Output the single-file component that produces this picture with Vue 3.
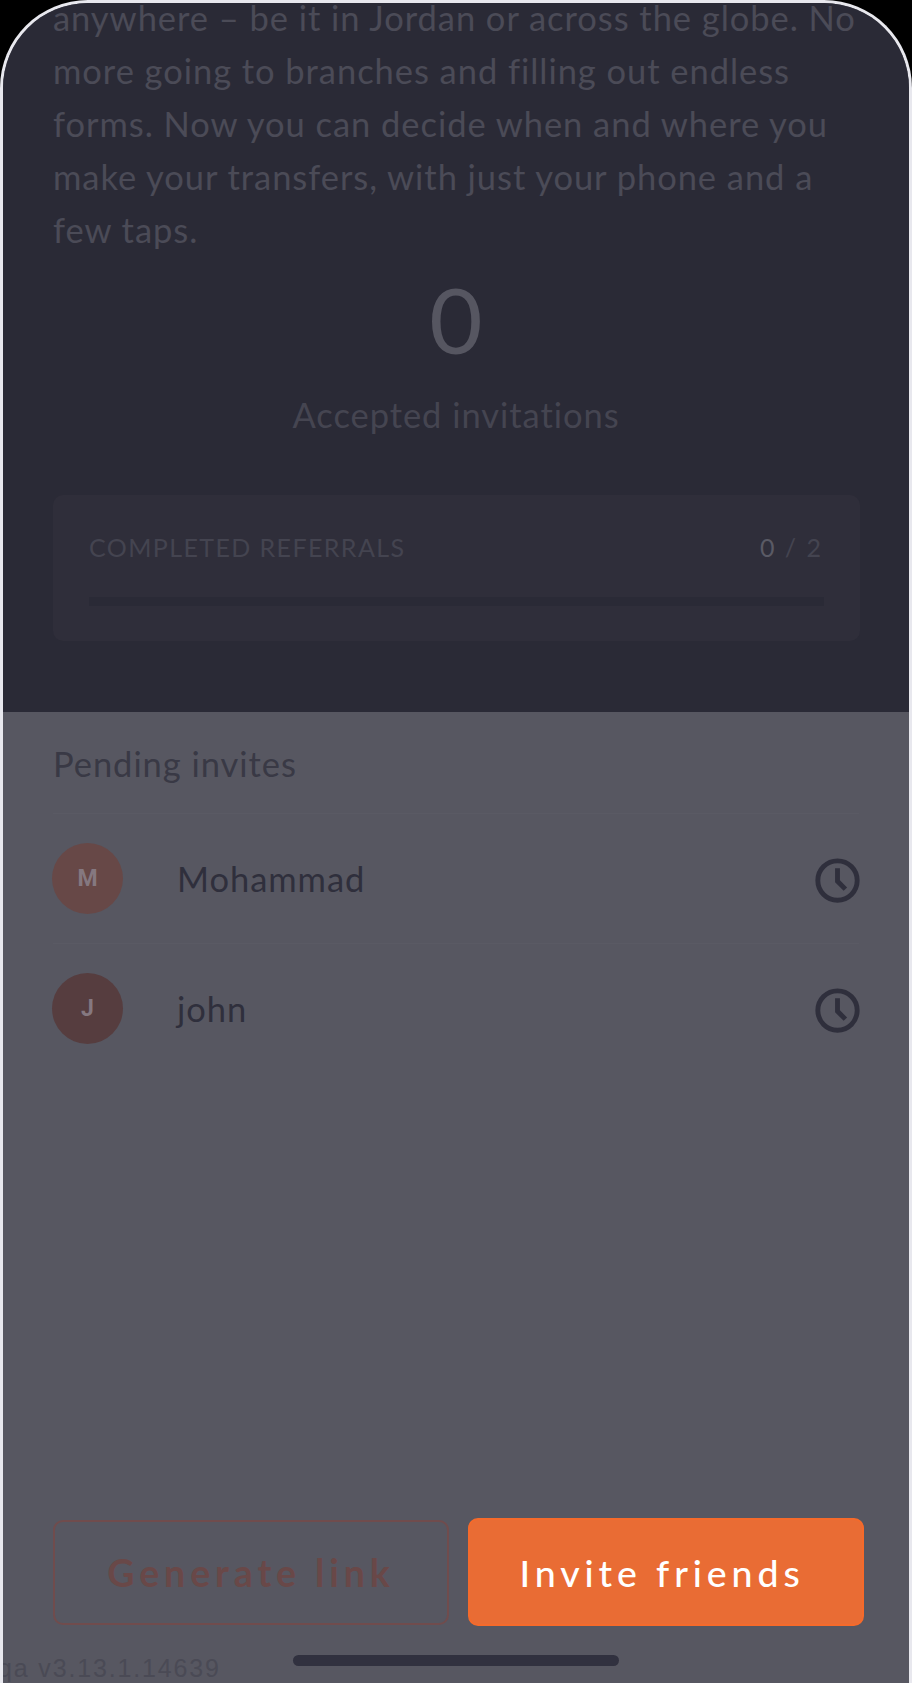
<script setup>
const invites = [
  { initial: 'M', name: 'Mohammad', tone: 'tone-m' },
  { initial: 'J', name: 'john', tone: 'tone-j' },
]
</script>

<template>
  <div class="device">
    <div class="screen">
      <section class="top">
        <p class="copy">anywhere – be it in Jordan or across the globe. No more going to branches and filling out endless forms. Now you can decide when and where you make your transfers, with just your phone and a few taps.</p>
        <div class="count">0</div>
        <div class="count-label">Accepted invitations</div>
        <div class="card">
          <div class="card-head">
            <span class="card-title">COMPLETED REFERRALS</span>
            <span class="card-value"><b>0</b> / 2</span>
          </div>
          <div class="track"></div>
        </div>
      </section>
      <section class="bottom">
        <h2 class="pending">Pending invites</h2>
        <ul class="list">
          <li v-for="item in invites" :key="item.name" class="row">
            <span class="avatar" :class="item.tone">{{ item.initial }}</span>
            <span class="name">{{ item.name }}</span>
            <svg class="clock" viewBox="0 0 24 24" fill="none" stroke="currentColor" stroke-width="2.6">
              <circle cx="12" cy="12" r="10.5" />
              <path d="M12 5.5V12.4L16.2 16.6" />
            </svg>
          </li>
        </ul>
        <div class="actions">
          <button class="btn ghost">Generate link</button>
          <button class="btn solid">Invite friends</button>
        </div>
      </section>
      <span class="version">qa v3.13.1.14639</span>
      <span class="home"></span>
    </div>
  </div>
</template>

<style>
html, body { margin: 0; background: #000; }
</style>

<style scoped>
.device {
  width: 912px;
  height: 1683px;
  background: #000;
  font-family: Lato, "Open Sans", sans-serif;
}
.screen {
  position: relative;
  box-sizing: border-box;
  height: 1683px;
  display: flex;
  flex-direction: column;
  overflow: hidden;
  border: 3px solid #e8e8ee;
  border-bottom: 0;
  border-radius: 88px 88px 0 0;
  background: #575761;
}
.top {
  box-sizing: border-box;
  height: 709px;
  padding: 0 50px;
  background: #2a2a36;
  display: flex;
  flex-direction: column;
}
.copy {
  margin: -12px -4px 0 0;
  font-size: 34.5px;
  line-height: 53px;
  letter-spacing: 0.95px;
  color: #4b4b57;
}
.count {
  margin-top: 8px;
  text-align: center;
  font-size: 92px;
  line-height: 110px;
  color: #565661;
}
.count-label {
  margin-top: 21px;
  text-align: center;
  font-size: 34.5px;
  line-height: 40px;
  letter-spacing: 0.95px;
  color: #454551;
}
.card {
  box-sizing: border-box;
  height: 146px;
  margin-top: 60px;
  width: 807px;
  padding: 36px 36px 0;
  border-radius: 10px;
  background: #2f2e3a;
}
.card-head {
  display: flex;
  justify-content: space-between;
  align-items: center;
  height: 32px;
  padding-right: 1px;
}
.card-title {
  font-size: 25px;
  letter-spacing: 1.4px;
  color: #444450;
}
.card-value {
  font-size: 25px;
  letter-spacing: 2px;
  color: #444450;
}
.card-value b {
  font-weight: 400;
  color: #5a5a65;
}
.track {
  height: 9px;
  margin-top: 34px;
  background: #2a2a36;
}
.bottom {
  flex: 1;
  position: relative;
  display: flex;
  flex-direction: column;
  padding: 0 50px;
}
.pending {
  margin: 32px 0 0;
  font-size: 34.5px;
  line-height: 40px;
  font-weight: 400;
  letter-spacing: 0.95px;
  color: #393945;
}
.list {
  margin: 0;
  padding: 0;
  list-style: none;
}
.row {
  display: flex;
  align-items: center;
  height: 130px;
  border-top: 1px solid #5a5a64;
  box-sizing: border-box;
}
.row:first-child { margin-top: 29px; }
.avatar {
  flex: none;
  width: 71px;
  height: 71px;
  margin-left: -1px;
  border-radius: 50%;
  display: flex;
  align-items: center;
  justify-content: center;
  font-family: Roboto, sans-serif;
  font-size: 23px;
  font-weight: 700;
}
.tone-m { background: #674847; color: #857880; }
.tone-j { background: #563d3f; color: #857880; }
.name {
  margin-left: 54px;
  flex: 1;
  font-size: 34.5px;
  letter-spacing: 0.95px;
  color: #2f2f3c;
}
.clock {
  flex: none;
  width: 45px;
  height: 45px;
  margin: 3px -1px 0 0;
  color: #2f2f3c;
}
.actions {
  position: absolute;
  left: 50px;
  top: 806px;
  display: flex;
  align-items: center;
  gap: 19px;
}
.btn {
  box-sizing: border-box;
  width: 396px;
  font-family: Lato, sans-serif;
  font-size: 37.5px;
  font-weight: 500;
  letter-spacing: 4.9px;
  border-radius: 10px;
}
.ghost {
  height: 105px;
  background: transparent;
  border: 2px solid #704c4d;
  color: #694848;
  font-weight: 700;
}
.solid {
  height: 108px;
  padding: 0 8px 0 0;
  background: #e96c34;
  border: 2px solid #f56a2b;
  color: #fff;
}
.version {
  position: absolute;
  left: -5px;
  top: 1650px;
  font-family: "Liberation Sans", sans-serif;
  font-size: 25px;
  letter-spacing: 1.85px;
  line-height: 30px;
  color: #4a4a55;
}
.home {
  position: absolute;
  left: 290px;
  top: 1652px;
  width: 326px;
  height: 11px;
  border-radius: 6px;
  background: #31313f;
}
</style>
